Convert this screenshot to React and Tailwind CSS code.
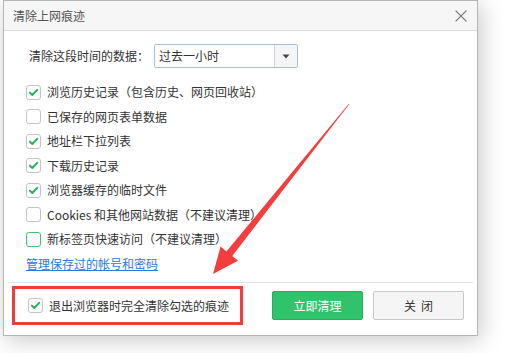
import React from "react";

function Box({ checked, green }) {
  return (
    <span
      className={
        "w-[15px] h-[15px] rounded-[3px] border bg-white flex items-center justify-center shrink-0 " +
        (green ? "border-[#3cc46e]" : "border-[#c4c4c4]")
      }
    >
      {checked && (
        <svg width="11" height="11" viewBox="0 0 11 11">
          <path d="M1.8 5.6 L4.3 8 L9.2 2.8" fill="none" stroke="#22b35a" strokeWidth="1.9" strokeLinecap="round" strokeLinejoin="round" />
        </svg>
      )}
    </span>
  );
}

function Row({ checked, green, children }) {
  return (
    <div className="h-[24.5px] flex items-center">
      <Box checked={checked} green={green} />
      <span className="ml-[6px] text-[12px] text-[#333] leading-none whitespace-nowrap">{children}</span>
    </div>
  );
}

export default function App() {
  return (
    <div className="relative w-[521px] h-[353px] bg-white overflow-hidden font-['Noto_Sans_CJK_SC',sans-serif]">
      <div className="ml-[3px] w-[475px] h-[336px] bg-white border border-[#b5b5b5] shadow-[3px_4px_22px_rgba(0,0,0,0.22)] flex flex-col">
        <div className="h-[30px] shrink-0 bg-[#f6f6f6] border-b border-[#dadada] flex items-center justify-between pl-[9px] pr-[9px]">
          <span className="text-[12px] text-[#555] leading-none">清除上网痕迹</span>
          <svg width="12" height="12" viewBox="0 0 12 12" className="mr-[1px]">
            <path d="M0.6 0.6 L11.4 11.4 M11.4 0.6 L0.6 11.4" stroke="#6f6f6f" strokeWidth="1.1" />
          </svg>
        </div>
        <div className="pl-[22px] pt-[13px] flex flex-col">
          <div className="h-[24px] flex items-center">
            <span className="ml-[3px] text-[12px] text-[#333] leading-none whitespace-nowrap">清除这段时间的数据：</span>
            <div className="ml-[5px] w-[144px] h-[24px] border border-[#a9c2d9] rounded-[2px] flex items-stretch">
              <div className="flex-1 flex items-center pl-[4px] text-[12px] text-[#333] leading-none">过去一小时</div>
              <div className="w-[23px] border-l border-[#c9d6e2] bg-[#f5f5f5] flex items-center justify-center">
                <svg width="8" height="5" viewBox="0 0 8 5">
                  <path d="M0.5 0.5 L7.5 0.5 L4 4.5 Z" fill="#444" />
                </svg>
              </div>
            </div>
          </div>
          <div className="mt-[12px] flex flex-col">
            <Row checked>浏览历史记录（包含历史、网页回收站）</Row>
            <Row>已保存的网页表单数据</Row>
            <Row checked>地址栏下拉列表</Row>
            <Row checked>下载历史记录</Row>
            <Row checked>浏览器缓存的临时文件</Row>
            <Row>Cookies 和其他网站数据（不建议清理）</Row>
            <Row green>新标签页快速访问（不建议清理）</Row>
          </div>
          <div className="h-[24px] flex items-center">
            <span className="text-[12px] text-[#2a7ae2] underline leading-none">管理保存过的帐号和密码</span>
          </div>
        </div>
        <div className="mt-[6px] mx-[4px] h-px bg-[#e3e3e3]" />
        <div className="h-[46px] flex items-center pr-[13px]">
          <div className="ml-[8px] w-[231px] h-[39px] border-[3px] border-[#f23b3b] flex items-center pl-[13px]">
            <Box checked />
            <span className="ml-[6px] text-[12px] text-[#333] leading-none whitespace-nowrap">退出浏览器时完全清除勾选的痕迹</span>
          </div>
          <div className="ml-auto flex gap-[10px]">
            <button className="w-[91px] h-[29px] rounded-[2px] bg-[#2fc46b] border border-[#27ad5c] text-white text-[12px] leading-none">立即清理</button>
            <button className="w-[91px] h-[29px] rounded-[2px] bg-[#f5f5f5] border border-[#c8c8c8] text-[#333] text-[12px] leading-none flex items-center justify-center gap-[5px]">
              <span>关</span>
              <span>闭</span>
            </button>
          </div>
        </div>
      </div>
      <svg className="absolute left-0 top-0 pointer-events-none" width="521" height="353" viewBox="0 0 521 353">
        <polygon
          points="349.2,104.3 232.2,256 238,260.8 213,274 220.5,246.6 226.4,251.6 348.6,103.9"
          fill="#f43e3e"
        />
      </svg>
    </div>
  );
}
